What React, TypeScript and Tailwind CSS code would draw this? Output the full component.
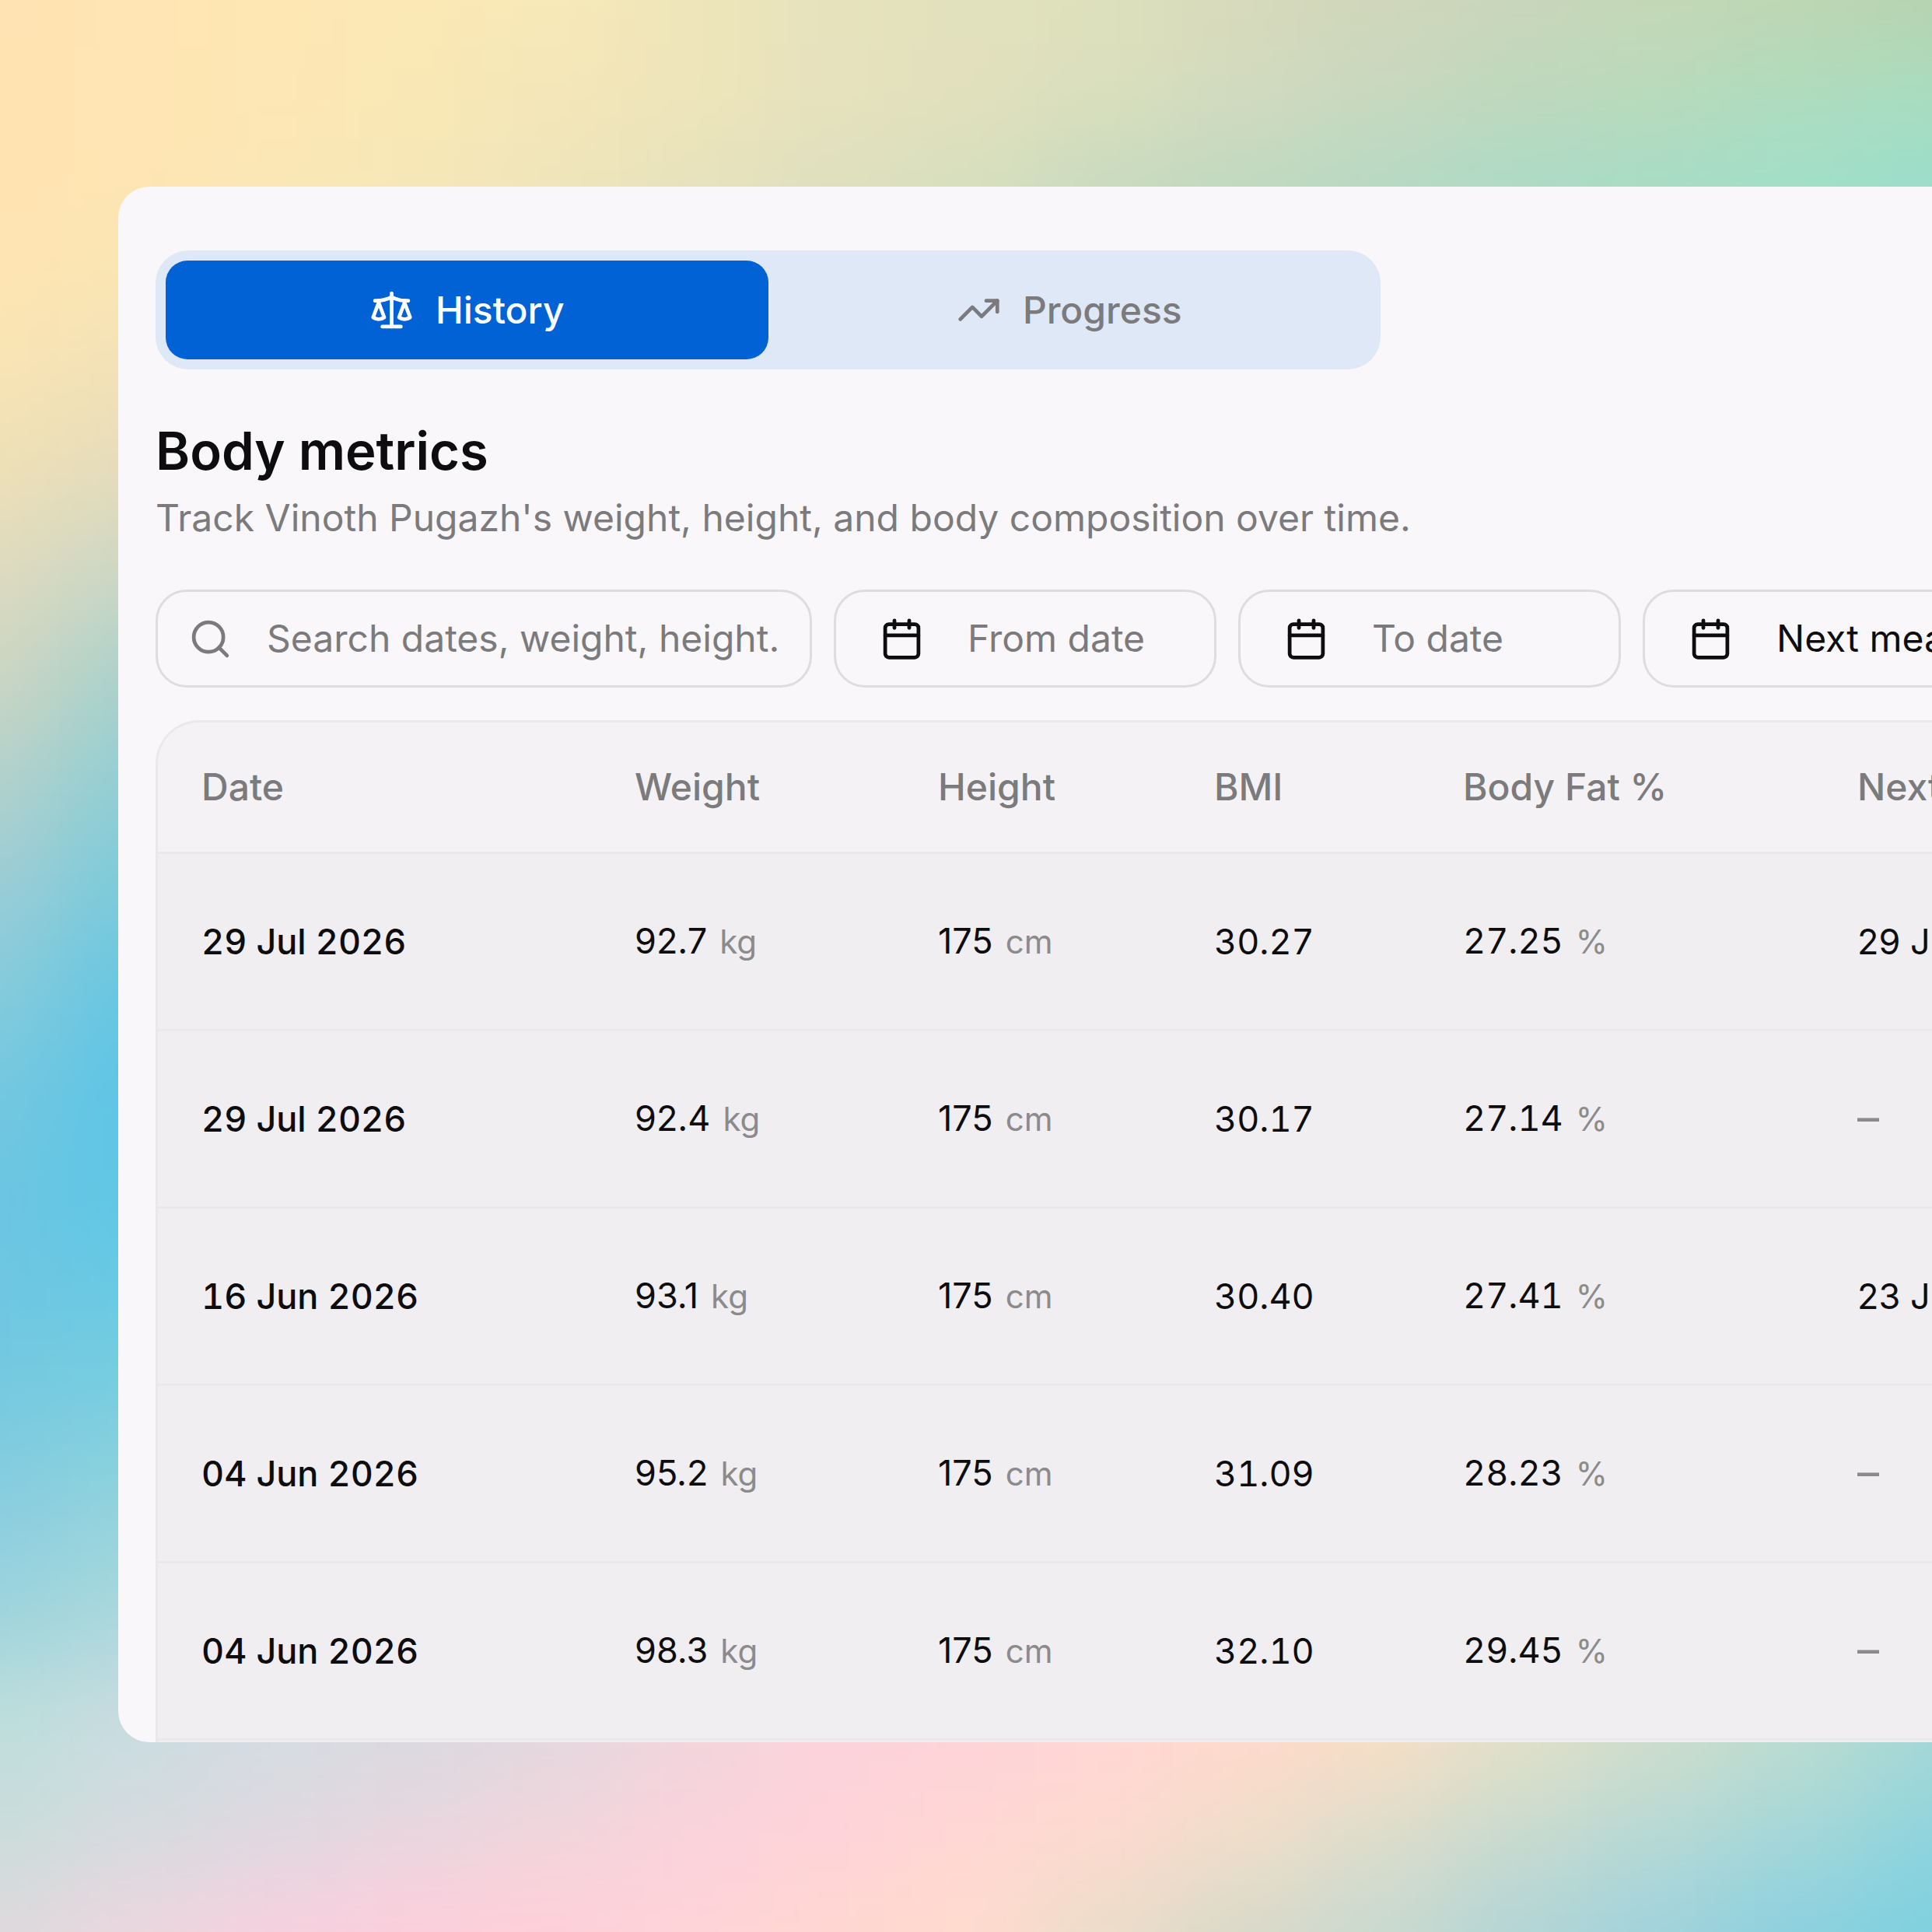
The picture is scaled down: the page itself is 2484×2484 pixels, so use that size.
import { Calendar, Scale, Search, TrendingUp } from "lucide-react"

// Wallpaper swatches. Each row runs left to right, one swatch every 112 units.
const TOP_ROWS = [
  { y: -200, h: 238, colors: ["#FFE3B2", "#FFE5B3", "#FEE7B3", "#FBE8B5", "#F8E9B8", "#EEE5BA", "#E6E3BC", "#E2E1BD", "#DEE0BC", "#D8DABB", "#D0D6BA", "#CAD6BA", "#C5D7B6", "#BFD6B2", "#B8D2AE"] },
  { y: 38, h: 76, colors: ["#FFE4B2", "#FFE5B3", "#FDE7B4", "#F9E8B5", "#F4E6B8", "#EFE5BA", "#E7E2BD", "#E3E0BD", "#DADFBD", "#D2DABF", "#C9D8BF", "#BFD8BD", "#B9DABC", "#AFDCBE", "#A9DDC0"] },
  { y: 114, h: 190, colors: ["#FFE4B1", "#FFE5B3", "#FAE7B6", "#F6E7B8", "#EFE5BB", "#E6E2BD", "#DEDFBE", "#D6DFBE", "#C8DABF", "#BFD9C0", "#B6D9C4", "#ACDBC6", "#A7DCC6", "#A1DFC9", "#9ADDCB"] },
]

const BOTTOM_ROWS = [
  { y: 1262, h: 190, colors: ["#BFDEDC", "#CBDCE0", "#D6DCE2", "#DADAE0", "#E3D8DE", "#F1D5DC", "#FCD3DC", "#FED3D9", "#FFD6D5", "#FFD9CC", "#F8DEC6", "#E2E0C8", "#CFDDCC", "#BCDCD0", "#A6D8D6"] },
  { y: 1452, h: 77, colors: ["#CBDCDB", "#D6DBDF", "#DFD8E0", "#E9D6DE", "#F2D5DC", "#FBD2DC", "#FFD3D9", "#FFD7D4", "#FEDACF", "#F0DECA", "#DCDDCB", "#C8DACF", "#B6D9D5", "#A4D7D9", "#8ED4DD"] },
  { y: 1529, h: 240, colors: ["#DFD9DD", "#EDD6DE", "#F8D0DF", "#FECEDC", "#FFCFD9", "#FFD4D8", "#FFD7D1", "#FFDBCE", "#EBDDC9", "#D8D9C9", "#C8D9D0", "#B2D5D6", "#A0D2DC", "#8BD0DF", "#7ED0E0"] },
]

// The left edge, top to bottom, one swatch every 84.5 units.
const LEFT_COLUMNS = [
  { x: -200, w: 248, colors: ["#FFE4B2", "#F9E4B4", "#EEE0B6", "#DEDABF", "#CDD5C2", "#B3D1CB", "#9CCCD6", "#86CBDB", "#74C7DF", "#6CC5E2", "#6EC6E2", "#78CADF", "#8ACDE0", "#9ED4DC"] },
  { x: 48, w: 152, colors: ["#FAE5B3", "#F3E2B7", "#E6DCBB", "#CCD7C5", "#ABD2CB", "#92CED4", "#7CCBDA", "#68C6E2", "#5EC5E6", "#5FC7E5", "#6BCAE3", "#7BCEDF", "#93D3DD", "#A9D8DC"] },
]

const ROWS = [
  { date: "29 Jul 2026", weight: "92.7", height: "175", bmi: "30.27", fat: "27.25", next: "29 Jul 2026" },
  { date: "29 Jul 2026", weight: "92.4", height: "175", bmi: "30.17", fat: "27.14", next: null },
  { date: "16 Jun 2026", weight: "93.1", height: "175", bmi: "30.40", fat: "27.41", next: "23 Jun 2026" },
  { date: "04 Jun 2026", weight: "95.2", height: "175", bmi: "31.09", fat: "28.23", next: null },
  { date: "04 Jun 2026", weight: "98.3", height: "175", bmi: "32.10", fat: "29.45", next: null },
]

const COLUMNS = [
  { label: "Date", width: "w-[557px]" },
  { label: "Weight", width: "w-[390px]" },
  { label: "Height", width: "w-[355px]" },
  { label: "BMI", width: "w-[320px]" },
  { label: "Body Fat %", width: "w-[507px]" },
  { label: "Next measurement", width: "w-[640px]" },
]

function Wallpaper() {
  return (
    <svg className="absolute inset-0 -z-10 h-full w-full" viewBox="0 0 1568 1568" preserveAspectRatio="none" aria-hidden="true">
      <defs>
        <filter id="soften" filterUnits="userSpaceOnUse" x="-200" y="-200" width="1968" height="1968" colorInterpolationFilters="sRGB">
          <feGaussianBlur stdDeviation="36" />
        </filter>
      </defs>
      <g filter="url(#soften)" shapeRendering="crispEdges">
        <rect x="-200" y="-200" width="1968" height="1968" fill="#DCDCC8" />
        {[...TOP_ROWS, ...BOTTOM_ROWS].map((row) =>
          row.colors.map((c, i) => {
            const last = i === row.colors.length - 1
            const x = i === 0 ? -200 : i * 112 - 56
            const w = i === 0 ? 256 : last ? 260 : 112
            return <rect key={`${row.y}-${i}`} x={x} y={row.y} width={w} height={row.h} fill={c} />
          })
        )}
        {LEFT_COLUMNS.map((col) =>
          col.colors.map((c, i) => (
            <rect key={`${col.x}-${i}`} x={col.x} y={169 + i * 84.5} width={col.w} height="85" fill={c} />
          ))
        )}
      </g>
    </svg>
  )
}

function Unit({ children }: { children: string }) {
  return <span className="ml-4 text-[42px] text-[#8b8a8c]">{children}</span>
}

function DateButton({ label }: { label: string }) {
  return (
    <button type="button" className="flex h-[126px] w-[492px] shrink-0 items-center gap-14 rounded-[40px] border-[3px] border-[#dddcdf] pl-14 text-[#7b7a7c]">
      <Calendar className="size-[57px] shrink-0 text-[#0d0d0f]" />
      {label}
    </button>
  )
}

export default function App() {
  return (
    <main className="relative isolate flex h-screen flex-col overflow-hidden pt-[240px] pb-[244px] pl-[152px] font-['Inter',sans-serif] text-[48px] leading-[72px] text-[#0d0d0f]">
      <Wallpaper />

      <section className="flex min-h-0 flex-1 flex-col overflow-hidden rounded-l-[40px] bg-[#f9f7fa] pt-[82px] pl-12">
        <div role="tablist" className="grid w-[1575px] shrink-0 grid-cols-2 rounded-[42px] bg-[#dfe8f6] p-[13px] font-medium">
          <button type="button" role="tab" aria-selected="true" className="flex h-[127px] items-center justify-center gap-7 rounded-[28px] bg-[#0062d4] text-white">
            <Scale className="size-[57px]" />
            History
          </button>
          <button type="button" role="tab" aria-selected="false" className="flex h-[127px] items-center justify-center gap-7 rounded-[28px] text-[#7b7a7c]">
            <TrendingUp className="size-[57px]" />
            Progress
          </button>
        </div>

        <h1 className="mt-[65px] text-[67px] leading-[80px] font-semibold">Body metrics</h1>
        <p className="mt-[10px] text-[#7b7a7c]">Track Vinoth Pugazh's weight, height, and body composition over time.</p>

        <div className="mt-14 flex shrink-0 gap-[28px]">
          <label className="flex h-[126px] w-[844px] shrink-0 items-center gap-[44px] rounded-[40px] border-[3px] border-[#dddcdf] pr-8 pl-[39px]">
            <Search className="size-[57px] shrink-0 text-[#7b7a7c]" />
            <input type="text" aria-label="Search" placeholder="Search dates, weight, height." className="min-w-0 flex-1 bg-transparent outline-none placeholder:text-[#7b7a7c]" />
          </label>
          <DateButton label="From date" />
          <DateButton label="To date" />
          <button type="button" className="flex h-[126px] shrink-0 items-center gap-14 rounded-[40px] border-[3px] border-[#dddcdf] px-14 whitespace-nowrap">
            <Calendar className="size-[57px] shrink-0" />
            Next measurement
          </button>
        </div>

        <div className="mt-[42px] min-h-0 flex-1 overflow-hidden rounded-tl-[56px] border-t-[3px] border-l-[3px] border-[#e9e8eb] bg-[#f0eef1]">
          <table className="w-[2769px] table-fixed border-separate border-spacing-0 text-left whitespace-nowrap">
            <thead>
              <tr>
                {COLUMNS.map((c) => (
                  <th key={c.label} scope="col" className={`${c.width} h-[169px] border-b-[3px] border-[#e9e8eb] bg-[#f4f2f5] pl-14 font-medium text-[#7b7a7c]`}>
                    {c.label}
                  </th>
                ))}
              </tr>
            </thead>
            <tbody className="text-[45px] [&_td]:h-[228px] [&_td]:border-b-[3px] [&_td]:border-[#e9e8eb] [&_td]:pl-14">
              {ROWS.map((r, i) => (
                <tr key={i}>
                  <td className="font-medium tabular-nums">{r.date}</td>
                  <td>{r.weight}<Unit>kg</Unit></td>
                  <td>{r.height}<Unit>cm</Unit></td>
                  <td className="tabular-nums">{r.bmi}</td>
                  <td className="tabular-nums">{r.fat}<Unit>%</Unit></td>
                  <td>{r.next ?? <span className="text-[56px] text-[#8b8a8c]">–</span>}</td>
                </tr>
              ))}
            </tbody>
          </table>
        </div>
      </section>
    </main>
  )
}
